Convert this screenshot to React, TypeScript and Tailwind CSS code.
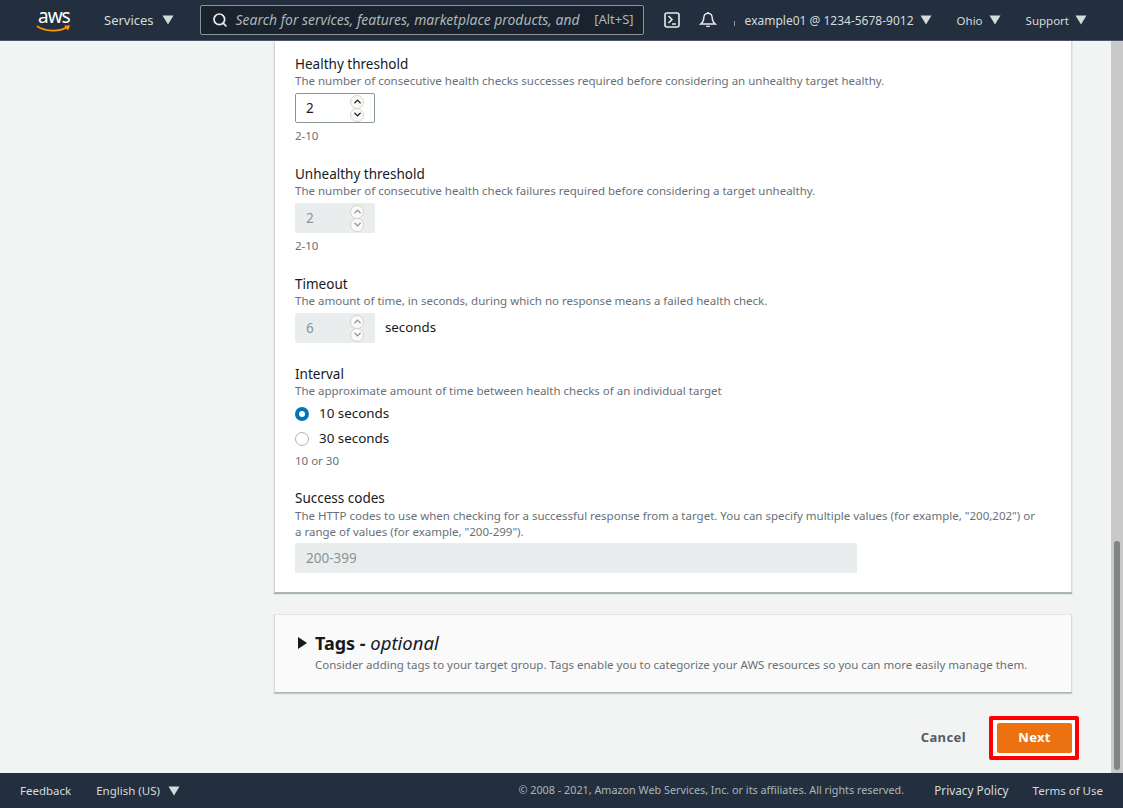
import { ChevronDown, ChevronUp, Search } from 'lucide-react';

const font = 'font-["Noto_Sans",sans-serif]';

function Caret({ className = '' }: { className?: string }) {
  return (
    <svg viewBox="0 0 12 10" className={`w-[12px] h-[10px] fill-[#d5dbdb] ${className}`}>
      <path d="M0.5 0.5h11L6 9.5z" />
    </svg>
  );
}

function AwsLogo() {
  return (
    <div className="flex flex-col w-[36px]">
      <span className="h-[18px] leading-[18px] text-[19px] tracking-[-1px] pl-[2px] text-white">aws</span>
      <svg viewBox="0 0 36 8" className="w-[36px] h-[8px]">
        <path d="M1.5 1.5c8 5 21 5.7 29 1" fill="none" stroke="#f90" strokeWidth="1.7" strokeLinecap="round" />
        <path d="M28 .8l6-.6-1.8 5.4z" fill="#f90" />
      </svg>
    </div>
  );
}

function Spinner({ disabled = false }: { disabled?: boolean }) {
  const color = disabled ? 'text-[#879596]' : 'text-[#16191f]';
  const cls = 'w-[14px] h-[14px] rounded-full border border-[#d8d2c8] bg-[#fbfaf8] flex items-center justify-center';
  return (
    <div className="flex flex-col -space-y-px">
      <div className={cls}><ChevronUp className={`w-[11px] h-[11px] ${color}`} strokeWidth={3} /></div>
      <div className={cls}><ChevronDown className={`w-[11px] h-[11px] ${color}`} strokeWidth={3} /></div>
    </div>
  );
}

function NumberBox({ value, disabled = false }: { value: string; disabled?: boolean }) {
  return (
    <div
      className={
        disabled
          ? 'w-[80px] h-[30px] rounded-[2px] bg-[#eaeded] flex items-center justify-between pl-[11px] pr-[11px] text-[#879596] text-[13.5px]'
          : 'w-[80px] h-[30px] rounded-[2px] bg-white border border-[#879596] flex items-center justify-between pl-[10px] pr-[10px] text-[#16191f] text-[13.5px]'
      }
    >
      <span>{value}</span>
      <Spinner disabled={disabled} />
    </div>
  );
}

function Field({ label, help, children }: { label: string; help: React.ReactNode; children: React.ReactNode }) {
  return (
    <div>
      <div className="text-[13.5px] leading-[20px] text-[#16191f]">{label}</div>
      <div className="text-[11.5px] leading-[16px] text-[#687078] -mt-px">{help}</div>
      {children}
    </div>
  );
}

function Radio({ checked, label }: { checked?: boolean; label: string }) {
  return (
    <div className="flex items-center h-[25px] gap-[10px] text-[13.4px] text-[#16191f]">
      {checked ? (
        <span className="w-[14px] h-[14px] rounded-full bg-white border-[4px] border-[#0073bb]" />
      ) : (
        <span className="w-[14px] h-[14px] rounded-full bg-white border border-[#aab7b8]" />
      )}
      <span>{label}</span>
    </div>
  );
}

function TopBar() {
  return (
    <header className="h-[41px] shrink-0 bg-[#232f3e] border-b border-[#4b5563] flex items-center text-[#d5dbdb] text-[12px]">
      <div className="ml-[36px] w-[34px] flex"><AwsLogo /></div>
      <span className="ml-[34px] text-[13px] pt-px">Services</span>
      <Caret className="ml-[8px]" />
      <div className="ml-[26px] w-[444px] h-[30px] rounded-[2px] border border-[#879596] bg-[#1a222d] flex items-center pl-[11px] pr-[9px] text-[13.9px]">
        <Search className="w-[16px] h-[16px] text-[#eaeded] shrink-0" strokeWidth={2.6} />
        <span className="ml-[8px] italic text-[#aab7b8] whitespace-nowrap">
          Search for services, features, marketplace products, and
        </span>
        <span className="ml-auto text-[13px] text-[#aab7b8] whitespace-nowrap">[Alt+S]</span>
      </div>
      <svg viewBox="0 0 16 16" className="ml-[20px] w-[16px] h-[16px] fill-none stroke-[#eaeded]" strokeWidth="1.6">
        <rect x="1" y="1" width="14" height="14" rx="2" />
        <path d="M4.5 4l3.5 3.5-3.5 3.5M8 12h4" />
      </svg>
      <svg viewBox="0 0 18 18" className="ml-[19px] w-[18px] h-[18px] fill-none stroke-[#eaeded]" strokeWidth="1.4">
        <path d="M9 2.2c-2.6 0-4.2 2-4.2 4.5 0 3-1 4.6-3 6.3h14.4c-2-1.7-3-3.3-3-6.3 0-2.5-1.6-4.5-4.2-4.5zM7.2 15.4h3.6" />
        <path d="M9 1v1.2" />
      </svg>
      <span className="ml-[17px] mt-[6px] w-px h-[5px] bg-[#8d99a8]" />
      <span className="ml-[10px] whitespace-nowrap text-[12px] pt-px">example01 @ 1234-5678-9012</span>
      <Caret className="ml-[6px] w-[11px]" />
      <span className="ml-[25px] text-[11.5px] pt-px">Ohio</span>
      <Caret className="ml-[6px] w-[11px]" />
      <span className="ml-[25px] text-[11.5px] pt-px">Support</span>
      <Caret className="ml-[6px] w-[11px]" />
    </header>
  );
}

function Footer() {
  return (
    <footer className="h-[35px] shrink-0 bg-[#232f3e] flex items-center text-[#d5dbdb] text-[11.5px]">
      <span className="ml-[20px]">Feedback</span>
      <span className="ml-[25px]">English (US)</span>
      <Caret className="ml-[8px] w-[10px] h-[8px]" />
      <span className="ml-auto text-[#aab7b8] text-[10.8px]">© 2008 - 2021, Amazon Web Services, Inc. or its affiliates. All rights reserved.</span>
      <span className="ml-[30px] text-[11.8px]">Privacy Policy</span>
      <span className="ml-[24px] mr-[20px]">Terms of Use</span>
    </footer>
  );
}

export default function App() {
  return (
    <div className={`${font} w-[1123px] h-[808px] overflow-hidden flex flex-col bg-[#f2f3f3]`}>
      <TopBar />
      <div className="flex-1 min-h-0 flex">
        <main className="flex-1 min-w-0 pl-[274px] pr-[39px]">
          <section className="h-[552px] bg-white border-x border-x-[#d5dbdb] border-b border-b-[#aab7b8] shadow-[0_1px_1px_0_rgba(0,28,36,0.3)] pl-[20px] pr-[19px] pt-[13px]">
            <Field label="Healthy threshold" help="The number of consecutive health checks successes required before considering an unhealthy target healthy.">
              <div className="mt-[4px]"><NumberBox value="2" /></div>
              <div className="mt-[5px] text-[11.5px] leading-[16px] text-[#687078]">2-10</div>
            </Field>
            <div className="mt-[20px]">
              <Field label="Unhealthy threshold" help="The number of consecutive health check failures required before considering a target unhealthy.">
                <div className="mt-[4px]"><NumberBox value="2" disabled /></div>
                <div className="mt-[5px] text-[11.5px] leading-[16px] text-[#687078]">2-10</div>
              </Field>
            </div>
            <div className="mt-[20px]">
              <Field label="Timeout" help="The amount of time, in seconds, during which no response means a failed health check.">
                <div className="mt-[4px] flex items-center gap-[10px]">
                  <NumberBox value="6" disabled />
                  <span className="text-[13.3px] text-[#16191f]">seconds</span>
                </div>
              </Field>
            </div>
            <div className="mt-[21px]">
              <Field label="Interval" help="The approximate amount of time between health checks of an individual target">
                <div className="mt-[2px]">
                  <Radio checked label="10 seconds" />
                  <Radio label="30 seconds" />
                </div>
                <div className="mt-[2px] text-[11.5px] leading-[16px] text-[#687078]">10 or 30</div>
              </Field>
            </div>
            <div className="mt-[19px]">
              <Field
                label="Success codes"
                help={
                  <div className="pt-px">
                    The HTTP codes to use when checking for a successful response from a target. You can specify multiple values (for example, "200,202") or
                    <br />a range of values (for example, "200-299").
                  </div>
                }
              >
                <div className="mt-[3px] w-[562px] h-[30px] rounded-[2px] bg-[#eaeded] flex items-center pl-[11px] text-[13.5px] text-[#879596]">200-399</div>
              </Field>
            </div>
          </section>

          <section className="mt-[21px] h-[79px] bg-[#fafafa] border border-[#e4e7e7] border-x-[#d5dbdb] border-b-[#aab7b8] pl-[23px] pt-[16px] shadow-[0_1px_1px_0_rgba(0,28,36,0.2)]">
            <div className="flex items-center gap-[8px]">
              <svg viewBox="0 0 9 12" className="w-[9px] h-[12px] fill-[#16191f]"><path d="M0 0l9 6-9 6z" /></svg>
              <h2 className="text-[18px] leading-[24px] font-bold text-[#16191f]">
                Tags - <em className="font-normal text-[18.5px]">optional</em>
              </h2>
            </div>
            <p className="ml-[17px] mt-[2px] text-[11.5px] leading-[16px] text-[#687078]">
              Consider adding tags to your target group. Tags enable you to categorize your AWS resources so you can more easily manage them.
            </p>
          </section>

          <div className="mt-[23px] flex items-center justify-end -mr-[7px]">
            <span className="mr-[23px] text-[13px] font-bold tracking-[0.4px] text-[#545b64]">Cancel</span>
            <div className="border-[4px] border-[#ff0000] rounded-[2px] bg-white py-[3px] pl-[4px] pr-[3px]">
              <div className="w-[75px] h-[30px] rounded-[2px] bg-[#ec7211] flex items-center justify-center text-[13px] font-bold tracking-[0.3px] text-white">Next</div>
            </div>
          </div>
        </main>
        <div className="w-[12px] shrink-0 bg-[#c9c9c9] flex flex-col justify-end items-start pl-[3px] pb-[3px]">
          <div className="w-[6px] h-[229px] rounded-[3px] bg-[#808685]" />
        </div>
      </div>
      <Footer />
    </div>
  );
}
